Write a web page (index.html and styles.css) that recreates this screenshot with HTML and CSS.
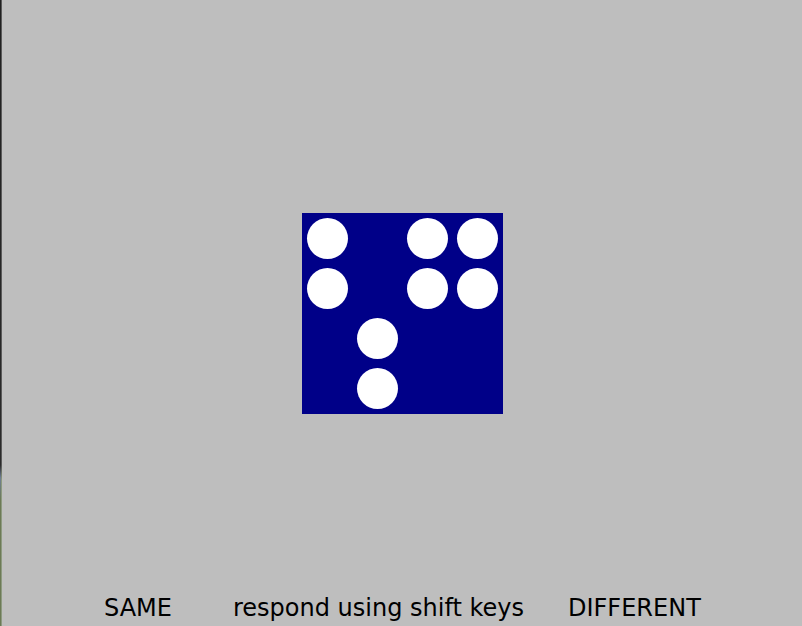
FILE: index.html
```html
<!DOCTYPE html>
<html lang="en">
<head>
<meta charset="utf-8">
<title>Same or different</title>
<link rel="stylesheet" href="styles.css">
</head>
<body>
<div class="stage">
  <div class="card">
    <span class="dot c1 r1"></span>
    <span class="dot c3 r1"></span>
    <span class="dot c4 r1"></span>
    <span class="dot c1 r2"></span>
    <span class="dot c3 r2"></span>
    <span class="dot c4 r2"></span>
    <span class="dot c2 r3"></span>
    <span class="dot c2 r4"></span>
  </div>
  <div class="labels">
    <span class="label same">SAME</span>
    <span class="label hint">respond using shift keys</span>
    <span class="label diff">DIFFERENT</span>
  </div>
</div>
</body>
</html>
```

FILE: styles.css
```css
html, body {
  margin: 0;
  padding: 0;
  width: 802px;
  height: 626px;
  overflow: hidden;
}
body {
  background:
    linear-gradient(to bottom, #202020 0, #2b2b2b 465px, #6f7f95 478px, #6c7a55 500px, #6c7a55 100%) left top / 1px 100% no-repeat,
    linear-gradient(to bottom, #5a5a5a 0, #5a5a5a 465px, #8d9a80 480px, #8d9a80 100%) 1px top / 1px 100% no-repeat,
    #bebebe;
  font-family: "DejaVu Sans", sans-serif;
  color: #000;
}
.stage {
  height: 626px;
  display: grid;
  grid-template-rows: 213px 201px 1fr;
  grid-template-columns: 1fr;
}
.card {
  grid-row: 2;
  justify-self: start;
  margin-left: 302px;
  width: 201px;
  height: 201px;
  background: #000088;
  display: grid;
  grid-template-columns: repeat(4, 50px);
  grid-template-rows: repeat(4, 50px);
  padding: 0 1px 1px 0;
  box-sizing: border-box;
}
.dot {
  width: 41px;
  height: 41px;
  border-radius: 50%;
  background: #fff;
  align-self: center;
  justify-self: center;
}
.c1 { grid-column: 1; }
.c2 { grid-column: 2; }
.c3 { grid-column: 3; }
.c4 { grid-column: 4; }
.r1 { grid-row: 1; }
.r2 { grid-row: 2; }
.r3 { grid-row: 3; }
.r4 { grid-row: 4; }
.labels {
  grid-row: 3;
  align-self: end;
  display: flex;
  padding: 0 0 0 104px;
  margin-bottom: 4px;
  font-size: 24px;
  line-height: 28px;
  white-space: nowrap;
}
.hint { margin-left: 61px; }
.diff { margin-left: 44px; }
```
